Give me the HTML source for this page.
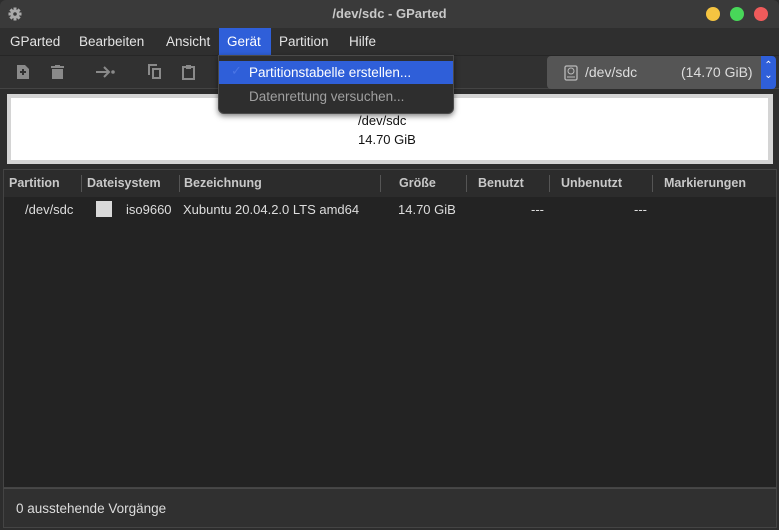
<!DOCTYPE html>
<html><head><meta charset="utf-8"><style>
*{margin:0;padding:0;box-sizing:border-box}
body{width:779px;height:530px;background:#2d2d2d;font-family:"Liberation Sans","DejaVu Sans",sans-serif;font-size:13px;color:#e0e0e0;position:relative;overflow:hidden}
.a{position:absolute}
#title{left:0;top:0;width:779px;height:28px;background:#3a3a3a;border-radius:6px 6px 0 0}
#menu{left:0;top:28px;width:779px;height:27px;background:#2f2f2f}
#menu span{position:absolute;top:6px;font-size:13.5px;color:#e4e4e4}
#tool{left:0;top:55px;width:779px;height:34px;background:#313131;border-top:1px solid #262626;border-bottom:1px solid #444}
.dot{width:14px;height:14px;border-radius:50%;top:7px}
</style></head><body>
<div class="a" id="title">
 <svg class="a" style="left:8px;top:7px" width="14" height="14" viewBox="0 0 14 14"><g fill="#aaa"><circle cx="7" cy="7" r="4.5"/><rect x="5.5" y="0.5" width="3" height="13"/><rect x="0.5" y="5.5" width="13" height="3"/><rect x="5.5" y="0.5" width="3" height="13" transform="rotate(45 7 7)"/><rect x="5.5" y="0.5" width="3" height="13" transform="rotate(-45 7 7)"/></g><circle cx="7" cy="7" r="1.8" fill="#3a3a3a"/></svg>
 <div class="a" style="left:0;width:779px;top:6px;text-align:center;font-weight:bold;color:#c8c8c8;font-size:13px">/dev/sdc - GParted</div>
 <div class="a dot" style="left:706px;background:#f5c441"></div>
 <div class="a dot" style="left:730px;background:#48d759"></div>
 <div class="a dot" style="left:754px;background:#ef5b5b"></div>
</div>
<div class="a" id="menu">
 <div class="a" style="left:219px;top:0;width:52px;height:27px;background:#2f5fd9"></div>
 <span style="left:10px">GParted</span><span style="left:79px">Bearbeiten</span><span style="left:166px">Ansicht</span><span style="left:227px;color:#fff">Gerät</span><span style="left:279px">Partition</span><span style="left:349px">Hilfe</span>
</div>
<div class="a" id="tool">
 <svg class="a" style="left:16px;top:9px" width="14" height="14" viewBox="0 0 14 14"><path d="M1 0h8l4 4v10H1z" fill="#8a8a8a"/><path d="M7 4v6M4 7h6" stroke="#313131" stroke-width="2"/></svg>
 <svg class="a" style="left:51px;top:9px" width="14" height="14" viewBox="0 0 14 14"><rect x="0" y="1" width="13" height="2" fill="#8a8a8a"/><rect x="4" y="0" width="5" height="2" fill="#8a8a8a"/><rect x="1" y="4" width="11" height="10" fill="#8a8a8a"/></svg>
 <svg class="a" style="left:96px;top:9px" width="20" height="14" viewBox="0 0 20 14"><path d="M0 7h12M8 2l5 5-5 5" stroke="#8a8a8a" stroke-width="2" fill="none"/><circle cx="17" cy="7" r="1.8" fill="#8a8a8a"/></svg>
 <svg class="a" style="left:148px;top:8px" width="14" height="16" viewBox="0 0 14 16"><path d="M1 11V1h8" stroke="#8a8a8a" stroke-width="2" fill="none"/><rect x="5" y="5" width="7" height="9" stroke="#8a8a8a" stroke-width="2" fill="none"/></svg>
 <svg class="a" style="left:182px;top:8px" width="13" height="16" viewBox="0 0 13 16"><rect x="1" y="3" width="11" height="12" stroke="#8a8a8a" stroke-width="2" fill="none"/><rect x="4" y="1" width="5" height="4" fill="#8a8a8a"/></svg>
 <div class="a" style="left:547px;top:0px;width:214px;height:33px;background:#555;border-radius:4px 0 0 4px"></div>
 <div class="a" style="left:761px;top:0px;width:15px;height:33px;background:#2f5fd9;border-radius:0 4px 4px 0;color:#fff;font-size:10px;line-height:10px;text-align:center;padding-top:5px">&#8963;<br>&#8964;</div>
 <svg class="a" style="left:564px;top:9px" width="14" height="16" viewBox="0 0 14 16"><rect x="1" y="1" width="12" height="14" rx="1.5" stroke="#bbb" fill="none" stroke-width="1.3"/><circle cx="7" cy="6" r="3" stroke="#bbb" fill="none"/><path d="M3 12h8" stroke="#bbb"/></svg>
 <div class="a" style="left:585px;top:8px;font-size:14px;color:#ddd">/dev/sdc</div>
 <div class="a" style="left:681px;top:8px;font-size:14px;color:#ddd">(14.70 GiB)</div>
</div>
<div class="a" style="left:7px;top:94px;width:766px;height:70px;background:#d4d4d4"></div>
<div class="a" style="left:11px;top:98px;width:757px;height:62px;background:#fff"></div>
<div class="a" style="left:358px;top:111px;color:#111;font-size:13px;line-height:19px">/dev/sdc<br>14.70 GiB</div>
<div class="a" style="left:3px;top:169px;width:774px;height:319px;background:#232323;border:1px solid #444"></div>
<div class="a" style="left:4px;top:170px;width:772px;height:27px;background:#2c2c2c"></div>
<div class="a" style="top:176px;font-weight:bold;color:#c8c8c8;font-size:12.5px;left:0;width:779px">
 <span class="a" style="left:9px">Partition</span><span class="a" style="left:87px">Dateisystem</span><span class="a" style="left:184px">Bezeichnung</span><span class="a" style="left:399px">Größe</span><span class="a" style="left:478px">Benutzt</span><span class="a" style="left:561px">Unbenutzt</span><span class="a" style="left:664px">Markierungen</span>
</div>
<div class="a" style="left:81px;top:175px;width:1px;height:17px;background:#555"></div>
<div class="a" style="left:179px;top:175px;width:1px;height:17px;background:#555"></div>
<div class="a" style="left:380px;top:175px;width:1px;height:17px;background:#555"></div>
<div class="a" style="left:466px;top:175px;width:1px;height:17px;background:#555"></div>
<div class="a" style="left:549px;top:175px;width:1px;height:17px;background:#555"></div>
<div class="a" style="left:652px;top:175px;width:1px;height:17px;background:#555"></div>
<div class="a" style="top:202px;left:0;width:779px;color:#ddd">
 <span class="a" style="left:25px">/dev/sdc</span>
 <span class="a" style="left:96px;top:-1px;width:16px;height:16px;background:#d9d9d9"></span>
 <span class="a" style="left:126px">iso9660</span><span class="a" style="left:183px">Xubuntu 20.04.2.0 LTS amd64</span><span class="a" style="left:398px">14.70 GiB</span><span class="a" style="left:531px">---</span><span class="a" style="left:634px">---</span>
</div>
<div class="a" style="left:3px;top:488px;width:774px;height:40px;background:#303030;border:1px solid #444;border-top:1px solid #484848"></div>
<div class="a" style="left:16px;top:501px;color:#ddd;font-size:13.5px">0 ausstehende Vorgänge</div>
<div class="a" style="left:218px;top:55px;width:236px;height:59px;background:#2e2e2e;border:1px solid #4a4a4a;border-radius:0 0 6px 6px;box-shadow:0 2px 6px rgba(0,0,0,.5)"></div>
<div class="a" style="left:219px;top:61px;width:234px;height:23px;background:#2f5fd9"></div>
<div class="a" style="left:231px;top:63px;color:#4a75e5;font-size:13px">&#10003;</div>
<div class="a" style="left:249px;top:65px;color:#fff;font-size:13.5px">Partitionstabelle erstellen...</div>
<div class="a" style="left:249px;top:89px;color:#a0a0a0;font-size:13.5px">Datenrettung versuchen...</div>
</body></html>
